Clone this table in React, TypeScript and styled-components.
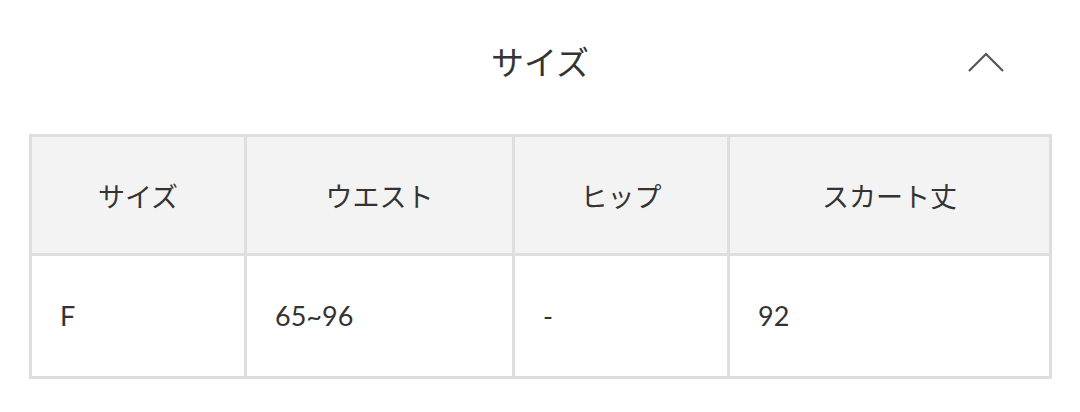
import React from "react";
import styled, { createGlobalStyle } from "styled-components";

const Global = createGlobalStyle`
  html, body { margin: 0; padding: 0; background: #fff; }
  body { font-family: Lato, "Noto Sans CJK JP", sans-serif; color: #333; }
`;

const Page = styled.div`
  width: 1080px;
  height: 412px;
  box-sizing: border-box;
  padding: 0 29px;
`;

const Header = styled.div`
  height: 134px;
  display: flex;
  align-items: flex-start;
  justify-content: center;
  position: relative;
`;

const Title = styled.h2`
  margin: 38px 0 0;
  font-family: "Noto Sans CJK JP", sans-serif;
  font-weight: 400;
  font-size: 33px;
  line-height: 46px;
  color: #333;
`;

const Toggle = styled.button`
  position: absolute;
  right: 44px;
  top: 50px;
  width: 40px;
  height: 26px;
  border: 0;
  background: none;
  padding: 0;
  display: flex;
  align-items: center;
  justify-content: center;
`;

const Table = styled.table`
  width: 1020px;
  border-collapse: collapse;
  table-layout: fixed;
  border: 3px solid #dedede;
`;

const Th = styled.th`
  background: #f3f3f3;
  border: 3px solid #dedede;
  height: 116px;
  padding: 0;
  font-family: "Noto Sans CJK JP", sans-serif;
  font-weight: 400;
  font-size: 27px;
  color: #333;
  text-align: center;
  vertical-align: middle;
`;

const Td = styled.td`
  background: #fff;
  border: 3px solid #dedede;
  height: 118px;
  padding: 0 0 2px 28px;
  font-family: Lato, "Noto Sans CJK JP", sans-serif;
  font-size: 27px;
  color: #333;
  text-align: left;
  vertical-align: middle;
`;

const cols = [215, 268, 215, 322];
const heads = ["サイズ", "ウエスト", "ヒップ", "スカート丈"];
const row = ["F", "65~96", "-", "92"];

export default function App() {
  return (
    <>
      <Global />
      <Page>
        <Header>
          <Title>サイズ</Title>
          <Toggle aria-label="collapse">
            <svg width="40" height="26" viewBox="0 0 40 26" fill="none">
              <polyline points="2,21 19,4 36,21" stroke="#555" strokeWidth="2.2" />
            </svg>
          </Toggle>
        </Header>
        <Table>
          <colgroup>
            {cols.map((w, i) => (
              <col key={i} style={{ width: w }} />
            ))}
          </colgroup>
          <thead>
            <tr>
              {heads.map((h) => (
                <Th key={h}>{h}</Th>
              ))}
            </tr>
          </thead>
          <tbody>
            <tr>
              {row.map((c, i) => (
                <Td key={i}>{c}</Td>
              ))}
            </tr>
          </tbody>
        </Table>
      </Page>
    </>
  );
}
